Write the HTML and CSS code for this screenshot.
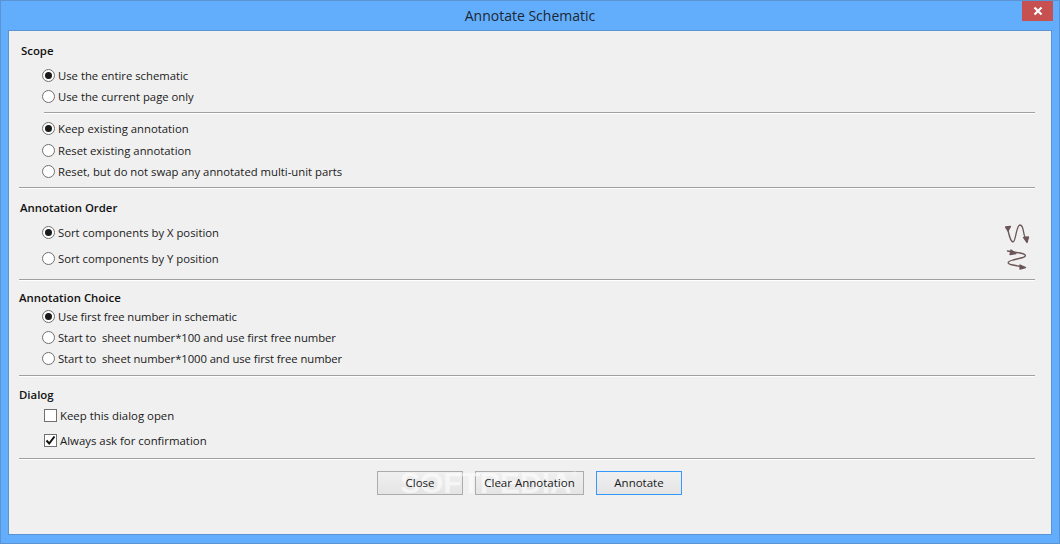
FILE: index.html
```html
<!DOCTYPE html>
<html lang="en">
<head>
<meta charset="utf-8">
<title>Annotate Schematic</title>
<link rel="stylesheet" href="styles.css">
</head>
<body>
<div class="window">
  <header class="titlebar">
    <span class="title">Annotate Schematic</span>
    <span class="close-btn"><svg width="10" height="10" viewBox="0 0 10 10"><path d="M1.500 1.500L8.500 8.500M8.500 1.500L1.500 8.500" stroke="#fff" stroke-width="2.2"/></svg></span>
  </header>
  <main class="client">
    <section class="sec sec-scope">
      <h2 class="head h-scope">Scope</h2>
      <div class="opts o-scope">
        <div class="opt"><span class="radio on"></span>Use the entire schematic</div>
        <div class="opt"><span class="radio"></span>Use the current page only</div>
      </div>
    </section>
    <hr class="sep sep-inset">
    <section class="sec sec-keep">
      <div class="opts">
        <div class="opt"><span class="radio on"></span>Keep existing annotation</div>
        <div class="opt"><span class="radio"></span>Reset existing annotation</div>
        <div class="opt"><span class="radio"></span>Reset, but do not swap any annotated multi-unit parts</div>
      </div>
    </section>
    <hr class="sep">
    <section class="sec sec-order">
      <h2 class="head h-order">Annotation Order</h2>
      <div class="order-row">
        <div class="opts o-order">
          <div class="opt"><span class="radio on"></span>Sort components by X position</div>
          <div class="opt"><span class="radio"></span>Sort components by Y position</div>
        </div>
        <svg class="order-icons" width="30" height="50" viewBox="0 0 30 50" fill="none" stroke="#6b5557" stroke-width="1.3" stroke-linecap="round" stroke-linejoin="round">
          <path d="M2.500 7C4 14 5.500 21 8 21C11 21 11 4 15 4C19 4 18 13 20 16L21.500 20"/>
          <path d="M0.500 6L5.500 5.500L3 10Z M18.500 16.500L23.500 16L22 21.500Z" fill="#6b5557"/>
          <path d="M2.500 30L15 32C21 33 22 35 18 36.500L8 39C1 41 2 43 8 44L18 46"/>
          <path d="M6 29L11 32.500L5 33.500Z M15 44L20.500 46.500L15 48Z" fill="#6b5557"/>
        </svg>
      </div>
    </section>
    <hr class="sep">
    <section class="sec sec-choice">
      <h2 class="head">Annotation Choice</h2>
      <div class="opts o-choice">
        <div class="opt"><span class="radio on"></span>Use first free number in schematic</div>
        <div class="opt"><span class="radio"></span>Start to&nbsp; sheet number*100 and use first free number</div>
        <div class="opt"><span class="radio"></span>Start to&nbsp; sheet number*1000 and use first free number</div>
      </div>
    </section>
    <hr class="sep">
    <section class="sec sec-dialog">
      <h2 class="head">Dialog</h2>
      <div class="opts o-dialog">
        <div class="opt check-opt"><span class="check"></span>Keep this dialog open</div>
        <div class="opt check-opt"><span class="check"><svg width="11" height="11" viewBox="0 0 11 11"><path d="M1.500 5.500L4.200 8.500L9.500 1.500" fill="none" stroke="#111" stroke-width="2"/></svg></span>Always ask for confirmation</div>
      </div>
    </section>
    <hr class="sep">
    <footer class="buttons">
      <button class="btn"><span class="btn-label">Close</span></button>
      <button class="btn wide"><span class="btn-label">Clear Annotation</span></button>
      <button class="btn default"><span class="btn-label">Annotate</span></button>
      <span class="watermark">SOFTPEDIA<sup class="reg">®</sup></span>
    </footer>
  </main>
</div>
</body>
</html>
```
FILE: styles.css
```css
* { box-sizing: border-box; }
html, body { margin: 0; padding: 0; }
body { width: 1060px; height: 544px; overflow: hidden; font-family: "Open Sans", "Noto Sans", sans-serif; font-size: 11.3px; color: #1a1a1a; }
.window { width: 1060px; height: 544px; background: #63aefc; border: 1px solid #5a94d2; display: flex; flex-direction: column; padding: 0 7px 8px; }
.titlebar { height: 29px; flex: none; display: flex; align-items: flex-start; justify-content: center; position: relative; }
.title { font-size: 14px; line-height: 30px; color: #1c2733; }
.close-btn { position: absolute; right: -1px; top: 0; width: 31px; height: 20px; background: #c75050; display: flex; align-items: center; justify-content: center; }
.client { flex: 1; background: #f0f0f0; border: 1px solid #5a94d2; padding: 0 16px 0 10px; display: flex; flex-direction: column; }
.sec { display: flex; flex-direction: column; flex: none; }
.head { margin: 0; font-size: 11.4px; font-weight: 600; line-height: 16px; color: #111; }
.opt { display: flex; align-items: center; gap: 3px; height: 21.5px; white-space: nowrap; }
.opts { padding-left: 23px; }
.radio { width: 13px; height: 13px; border-radius: 50%; border: 1px solid #707070; background: #fff; position: relative; flex: none; }
.radio.on::after { content: ""; position: absolute; left: 2px; top: 2px; width: 7px; height: 7px; border-radius: 50%; background: #1a1a1a; }
.check { width: 13px; height: 13px; border: 1px solid #707070; background: #fff; flex: none; display: flex; align-items: center; justify-content: center; }
.sep { margin: 0; border: 0; height: 2px; flex: none; background: linear-gradient(#a0a0a0 50%, #fff 50%); }
.sep-inset { margin-left: 25px; }
.sec-scope { height: 81px; padding-top: 12px; }
.h-scope { padding-left: 2px; }
.o-scope { margin-top: 6px; }
.o-scope .opt { height: 21px; }
.sec-keep { height: 73px; padding-top: 4px; }
.sec-keep .opt { height: 21.4px; }
.sec-order { height: 90px; padding-top: 11px; }
.h-order { padding-left: 1px; }
.order-row { display: flex; justify-content: space-between; align-items: flex-start; }
.o-order { margin-top: 3px; }
.o-order .opt { height: 26px; }
.order-icons { margin: 5px 0 0 0; flex: none; }
.sec-choice { height: 94px; padding-top: 9px; }
.o-choice { letter-spacing: -0.08px; }
.o-choice .opt { height: 21px; }
.sec-dialog { height: 81px; padding-top: 10px; }
.o-dialog { padding-left: 25px; font-size: 11.4px; }
.check-opt { height: 25px; }
.buttons { display: flex; justify-content: center; gap: 12px; padding: 11px 0 0 5px; position: relative; }
.btn { height: 24px; width: 86px; font: inherit; font-size: 11.5px; color: #1a1a1a; border: 1px solid #acacac; background: linear-gradient(#f0f0f0, #e5e5e5); padding: 0 0 2px; }
.btn.wide { width: 109px; }
.btn.default { border-color: #3399ff; }
.btn-label { position: relative; z-index: 2; }
.watermark { position: absolute; z-index: 1; left: 381px; top: 5px; font-family: "Liberation Sans", sans-serif; font-weight: 700; font-size: 30px; line-height: 36px; color: rgba(255,255,255,.6); pointer-events: none; }
.reg { font-size: 8px; line-height: 0; vertical-align: 16px; font-weight: 400; }
```
